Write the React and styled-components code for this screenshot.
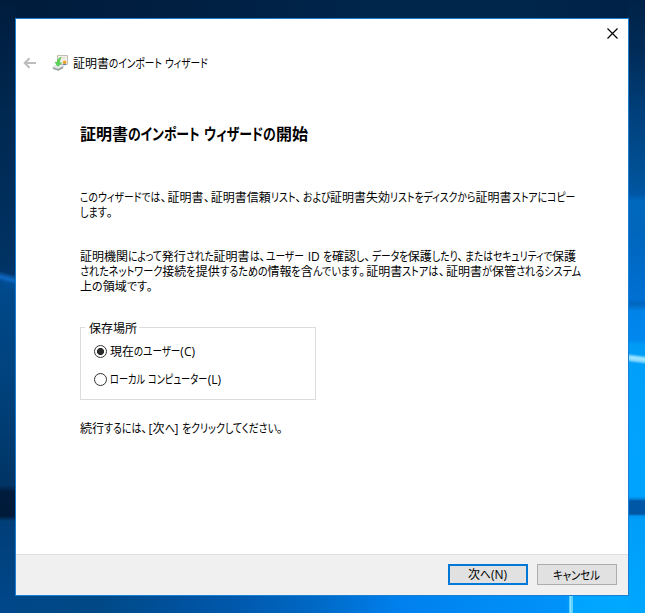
import React, { useLayoutEffect, useRef, useState } from "react";
import styled, { createGlobalStyle, css } from "styled-components";

const GlobalStyle = createGlobalStyle`
  * {
    box-sizing: border-box;
  }

  body {
    margin: 0;
    overflow: hidden;
  }
`;

const colors = {
  accent: "#0078d7",
  text: "#000",
  footer: "#f0f0f0",
  line: "#dcdcdc",
};

// wallpaper: the light beams first, then the left, right, bottom and top strips
const Desktop = styled.div`
  width: 645px;
  height: 613px;
  padding: 18px 16px 17px 15px;
  background:
    linear-gradient(90deg, #35baff, #9aeaff 35%, #45c6ff 55%, #8ae6ff 80%, #28b2ff)
      569px 595px / 4px 18px no-repeat,
    linear-gradient(
        195deg,
        transparent 20%,
        rgba(16, 110, 205, 0.9) 46%,
        rgba(0, 90, 175, 0.5) 62%,
        transparent 90%
      )
      0 270px / 16px 20px no-repeat,
    linear-gradient(
        187deg,
        transparent 20%,
        #a2e6ff 42%,
        #83d8ff 60%,
        transparent 78%
      )
      628px 352px / 17px 14px no-repeat,
    linear-gradient(
        180deg,
        #001c3d 0,
        #002850 110px,
        #003263 260px,
        #003469 275px,
        #00498a 288px,
        #00427d 380px,
        #003565 485px,
        #001b3c 492px,
        #001a39 516px,
        #003e78 521px,
        #00488b 613px
      )
      0 0 / 16px 100% no-repeat,
    linear-gradient(
        180deg,
        #002247 0,
        #002b57 50px,
        #003f7a 110px,
        #00549b 185px,
        #0057a6 194px,
        #0068bd 201px,
        #0066bd 235px,
        #0070d3 299px,
        #0066bd 304px,
        #0083e8 311px,
        #0088ee 340px,
        #009bf4 345px,
        #00a0fa 370px,
        #00a4ff 496px,
        #0086dc 499px,
        #0057a5 501px,
        #0057a5 514px,
        #0094ee 516px,
        #009ef8 520px,
        #00a7ff 613px
      )
      628px 0 / 17px 100% no-repeat,
    linear-gradient(
        90deg,
        #004788 0,
        #004986 100px,
        #00509b 170px,
        #0059ad 240px,
        #006ac7 320px,
        #0080ee 400px,
        #008cf5 500px,
        #0093fa 565px,
        #00a4ff 575px,
        #00aaff 645px
      )
      0 595px / 100% 18px no-repeat,
    linear-gradient(
      90deg,
      #001b3c 0,
      #001f41 180px,
      #00264c 380px,
      #00264c 520px,
      #002146 645px
    );
  font-family: "Noto Sans CJK JP", sans-serif;
  font-size: 12px;
  color: ${colors.text};
`;

const Window = styled.div`
  display: flex;
  flex-direction: column;
  height: 578px;
  border: 1px solid #1a80d6;
  background-color: #fff;
`;

const TitleBar = styled.header`
  display: flex;
  justify-content: flex-end;
  height: 28px;
  padding: 9px 10px 0 0;
`;

const CloseButton = styled.button`
  width: 11px;
  height: 11px;
  padding: 0;
  border: none;
  background: none;
  line-height: 0;
`;

const NavRow = styled.div`
  display: flex;
  align-items: center;
  height: 32px;
  padding-left: 7px;
  line-height: 15px;
`;

const BackArrow = styled.svg`
  margin-right: 15px;
`;

const WizardIcon = styled.svg`
  margin-right: 5px;
`;

const Content = styled.main`
  flex: 1;
  padding: 44px 36px 0 64px;
`;

const Heading = styled.h1`
  margin: 0 0 46px;
  font-size: 16px;
  font-weight: 700;
  line-height: 20px;
`;

const Paragraph = styled.p`
  margin: 0 0 ${({ $gap }) => $gap || 0}px;
  line-height: 15px;
`;

const Group = styled.fieldset`
  width: 236px;
  height: 80px;
  margin: 0 0 20px;
  padding: 6px 0 0 13px;
  border: 1px solid ${colors.line};
  min-width: 0;
`;

const Legend = styled.legend`
  margin-left: -9px;
  padding: 0 2px 0 4px;
  line-height: 15px;
`;

const Option = styled.label`
  display: flex;
  align-items: center;
  gap: 3px;
  height: 20px;
  margin-bottom: 8px;
  line-height: 15px;
`;

const Radio = styled.input`
  appearance: none;
  width: 13px;
  height: 13px;
  margin: 0;
  border: 1px solid #333;
  border-radius: 50%;
  background-color: #fff;

  &:checked {
    background-image: radial-gradient(circle, #2b2b2b 3.2px, transparent 3.9px);
  }
`;

const Footer = styled.footer`
  display: flex;
  justify-content: flex-end;
  gap: 9px;
  height: 41px;
  padding: 9px 11px 0 0;
  border-top: 1px solid #dfdfdf;
  background-color: ${colors.footer};
`;

const Button = styled.button`
  display: flex;
  align-items: center;
  justify-content: center;
  width: 80px;
  height: 21px;
  padding: 0 1px 0 0;
  border: 1px solid #adadad;
  background-color: #e1e1e1;
  font: inherit;
  line-height: 15px;
  color: ${colors.text};

  ${({ $primary }) =>
    $primary &&
    css`
      border: 2px solid ${colors.accent};
    `}
`;

const LineBox = styled.span`
  display: block;
  padding-bottom: ${({ $lift }) => $lift || 0}px;
  white-space: pre;
`;

const runStyles = {
  kana: css`
    font-feature-settings: "palt";
    transform-origin: 0 50%;
  `,
  latin: css`
    font-family: "Open Sans", sans-serif;
    line-height: 1;
  `,
  mark: css`
    width: 0.6em;
  `,
  space: css`
    width: 0.28em;
  `,
};

const Run = styled.span`
  display: inline-block;
  ${({ $kind }) => runStyles[$kind]}
`;

const kindOf = (char) => {
  if (char === " ") return "space";
  if (/[、。]/.test(char)) return "mark";
  if (/[\u3040-\u30ff]/.test(char)) return "kana";
  if (/[\u0021-\u007e]/.test(char)) return "latin";
  return "kanji";
};

const splitRuns = (text) =>
  [...text].reduce((runs, char) => {
    const kind = kindOf(char);
    const last = runs[runs.length - 1];
    if (last && last.kind === kind) {
      last.text += char;
    } else {
      runs.push({ kind, text: char });
    }
    return runs;
  }, []);

// One line of UI text: kanji keep their full width, kana are condensed
// so that the line takes the given width.
function Line({ width, lift, children }) {
  const ref = useRef(null);
  const [fit, setFit] = useState(null);
  const runs = splitRuns(children);

  useLayoutEffect(() => {
    const widths = [...ref.current.children].map(
      (el) => el.getBoundingClientRect().width
    );
    let kana = 0;
    let rest = 0;
    runs.forEach((run, i) => {
      if (run.kind === "kana") kana += widths[i];
      else rest += widths[i];
    });
    if (kana > 0) setFit({ widths, scale: (width - rest) / kana });
  }, [width, children]);

  return (
    <LineBox ref={ref} $lift={lift}>
      {runs.map((run, i) => (
        <Run
          key={i}
          $kind={run.kind}
          style={
            fit && run.kind === "kana"
              ? {
                  width: fit.widths[i] * fit.scale,
                  transform: `scaleX(${fit.scale})`,
                }
              : undefined
          }
        >
          {run.text}
        </Run>
      ))}
    </LineBox>
  );
}

function CertificateIcon() {
  return (
    <WizardIcon width="16" height="16" viewBox="0 0 16 16">
      <path d="M5.5.5h10v9h-10z" fill="#f4f0e6" stroke="#c2bcb2" />
      <path d="M9 3h4" stroke="#ddd7ca" />
      <path d="M.8 11.5 4 9.5l7.5 1.3-.3 2.4-5 2.5-5.4-2z" fill="#dde0e2" />
      <path d="m.8 12.2 5.2 1.7 5.2-2.6v2l-5 2.5-5.4-2z" fill="#9a9fa3" />
      <path d="m3 11 3.4 1.2 3-1.3" fill="none" stroke="#f5f6f7" />
      <path
        d="M9.2 2.2C6.5 3 5.2 5 5.1 7.3L3 7.2l2.7 4.2 4-3.5-2-.2c0-2 .5-3.8 1.5-5.5z"
        fill="#5ad556"
        stroke="#46b84a"
        strokeWidth=".5"
      />
      <path d="m11.6 8-.4 2.4 1.4-.6 1.4.6-.4-2.4z" fill="#4a78ae" />
      <circle cx="12.6" cy="7.3" r="1.8" fill="#eda52d" />
    </WizardIcon>
  );
}

export default function App() {
  const [place, setPlace] = useState("user");

  return (
    <>
      <GlobalStyle />
      <Desktop>
        <Window>
          <TitleBar>
            <CloseButton aria-label="閉じる">
              <svg width="11" height="11" viewBox="0 0 11 11">
                <path
                  d="m.5.5 10 10m0-10-10 10"
                  stroke="#000"
                  strokeWidth="1.15"
                />
              </svg>
            </CloseButton>
          </TitleBar>
          <NavRow>
            <BackArrow width="14" height="12" viewBox="0 0 14 12">
              <path
                d="M13 6H2M6.5 1.2 1.7 6l4.8 4.8"
                fill="none"
                stroke="#bdbdbd"
                strokeWidth="2"
              />
            </BackArrow>
            <CertificateIcon />
            <Line width={135} lift={2}>
              証明書のインポート ウィザード
            </Line>
          </NavRow>
          <Content>
            <Heading>
              <Line width={228}>証明書のインポート ウィザードの開始</Line>
            </Heading>
            <Paragraph $gap={29}>
              <Line width={495}>
                このウィザードでは、証明書、証明書信頼リスト、および証明書失効リストをディスクから証明書ストアにコピー
              </Line>
              <Line width={34}>します。</Line>
            </Paragraph>
            <Paragraph $gap={27}>
              <Line width={496}>
                証明機関によって発行された証明書は、ユーザー ID を確認し、データを保護したり、またはセキュリティで保護
              </Line>
              <Line width={501}>
                されたネットワーク接続を提供するための情報を含んでいます。証明書ストアは、証明書が保管されるシステム
              </Line>
              <Line width={74}>上の領域です。</Line>
            </Paragraph>
            <Group>
              <Legend>
                <Line width={48}>保存場所</Line>
              </Legend>
              <Option>
                <Radio
                  type="radio"
                  name="place"
                  checked={place === "user"}
                  onChange={() => setPlace("user")}
                />
                <Line width={85} lift={2}>
                  現在のユーザー(C)
                </Line>
              </Option>
              <Option>
                <Radio
                  type="radio"
                  name="place"
                  checked={place === "computer"}
                  onChange={() => setPlace("computer")}
                />
                <Line width={111} lift={2}>
                  ローカル コンピューター(L)
                </Line>
              </Option>
            </Group>
            <Paragraph>
              <Line width={204}>続行するには、[次へ] をクリックしてください。</Line>
            </Paragraph>
          </Content>
          <Footer>
            <Button $primary>
              <Line width={39} lift={2}>
                次へ(N)
              </Line>
            </Button>
            <Button>
              <Line width={47} lift={1}>
                キャンセル
              </Line>
            </Button>
          </Footer>
        </Window>
      </Desktop>
    </>
  );
}
